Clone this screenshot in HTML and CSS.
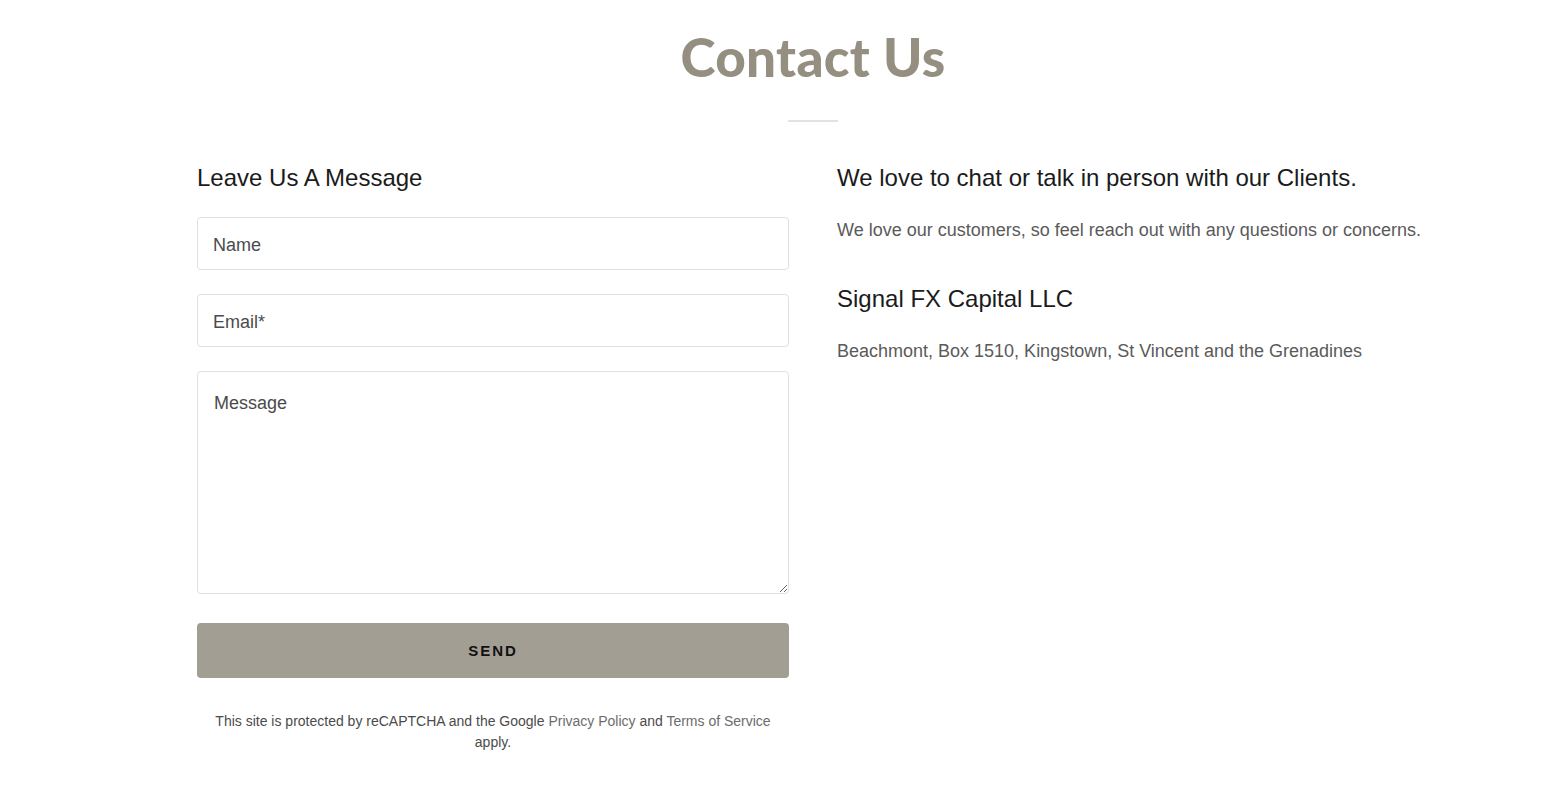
FILE: index.html
```html
<!DOCTYPE html>
<html lang="en">
<head>
<meta charset="utf-8">
<title>Contact Us</title>
<link rel="stylesheet" href="styles.css">
</head>
<body>
<main class="page">
  <section class="contact">
    <h1 class="title">Contact Us</h1>
    <div class="divider"></div>
    <div class="columns">
      <div class="col">
        <h2 class="heading">Leave Us A Message</h2>
        <form class="form">
          <input class="field" type="text" placeholder="Name">
          <input class="field" type="email" placeholder="Email*">
          <textarea class="field area" placeholder="Message"></textarea>
          <button class="send" type="button">SEND</button>
        </form>
        <p class="recaptcha">This site is protected by reCAPTCHA and the Google <a href="#">Privacy Policy</a> and <a href="#">Terms of Service</a> apply.</p>
      </div>
      <div class="col">
        <h2 class="heading">We love to chat or talk in person with our Clients.</h2>
        <p class="body">We love our customers, so feel reach out with any questions or concerns.</p>
        <h2 class="heading heading-gap">Signal FX Capital LLC</h2>
        <p class="body">Beachmont, Box 1510, Kingstown, St Vincent and the Grenadines</p>
      </div>
    </div>
  </section>
</main>
</body>
</html>
```
FILE: styles.css
```css
* { box-sizing: border-box; }
html, body { margin: 0; padding: 0; background: #fff; }
body { font-family: "Liberation Sans", Arial, sans-serif; color: #1b1b1b; }

.page {
  padding-left: 60px;
  display: flex;
  justify-content: center;
}
.contact {
  width: 1232px;
  display: flex;
  flex-direction: column;
  align-items: center;
  padding-top: 23px;
}
.title {
  margin: 0;
  font-family: "Lato", "Liberation Sans", sans-serif;
  font-weight: 900;
  font-size: 53px;
  line-height: 68px;
  color: #958f82;
  letter-spacing: 0.3px;
}
.divider {
  width: 50px;
  height: 2px;
  background: #e2e2e2;
  margin-top: 29px;
}
.columns {
  width: 100%;
  display: grid;
  grid-template-columns: 592px 1fr;
  column-gap: 48px;
  margin-top: 41px;
}
.col { display: flex; flex-direction: column; }
.heading {
  margin: 0 0 24px;
  font-weight: 400;
  font-size: 24px;
  line-height: 30px;
  color: #1b1b1b;
}
.heading-gap { margin-top: 40px; margin-bottom: 24px; }
.form { display: flex; flex-direction: column; gap: 24px; }
.field {
  display: block;
  width: 100%;
  height: 53px;
  border: 1px solid #e0e0e0;
  border-radius: 4px;
  padding: 4px 15px 0;
  font-family: "Liberation Sans", Arial, sans-serif;
  font-size: 18px;
  color: #4b4b4b;
  background: #fff;
  outline: none;
}
.field::placeholder { color: #4b4b4b; opacity: 1; }
.area {
  height: 223px;
  padding: 20px 16px;
  line-height: 22px;
  resize: vertical;
}
.send {
  margin-top: 5px;
  height: 55px;
  border: none;
  border-radius: 4px;
  background: #a39e94;
  color: #111;
  font-family: "Liberation Sans", Arial, sans-serif;
  font-weight: 700;
  font-size: 15px;
  letter-spacing: 2px;
  cursor: pointer;
}
.recaptcha {
  margin: 33px 0 0;
  text-align: center;
  font-size: 14px;
  line-height: 21px;
  color: #4b4b4b;
}
.recaptcha a { color: #6c6c6c; text-decoration: none; }
.body {
  margin: 0;
  font-size: 18px;
  line-height: 27px;
  color: #5a5a5a;
}
```
